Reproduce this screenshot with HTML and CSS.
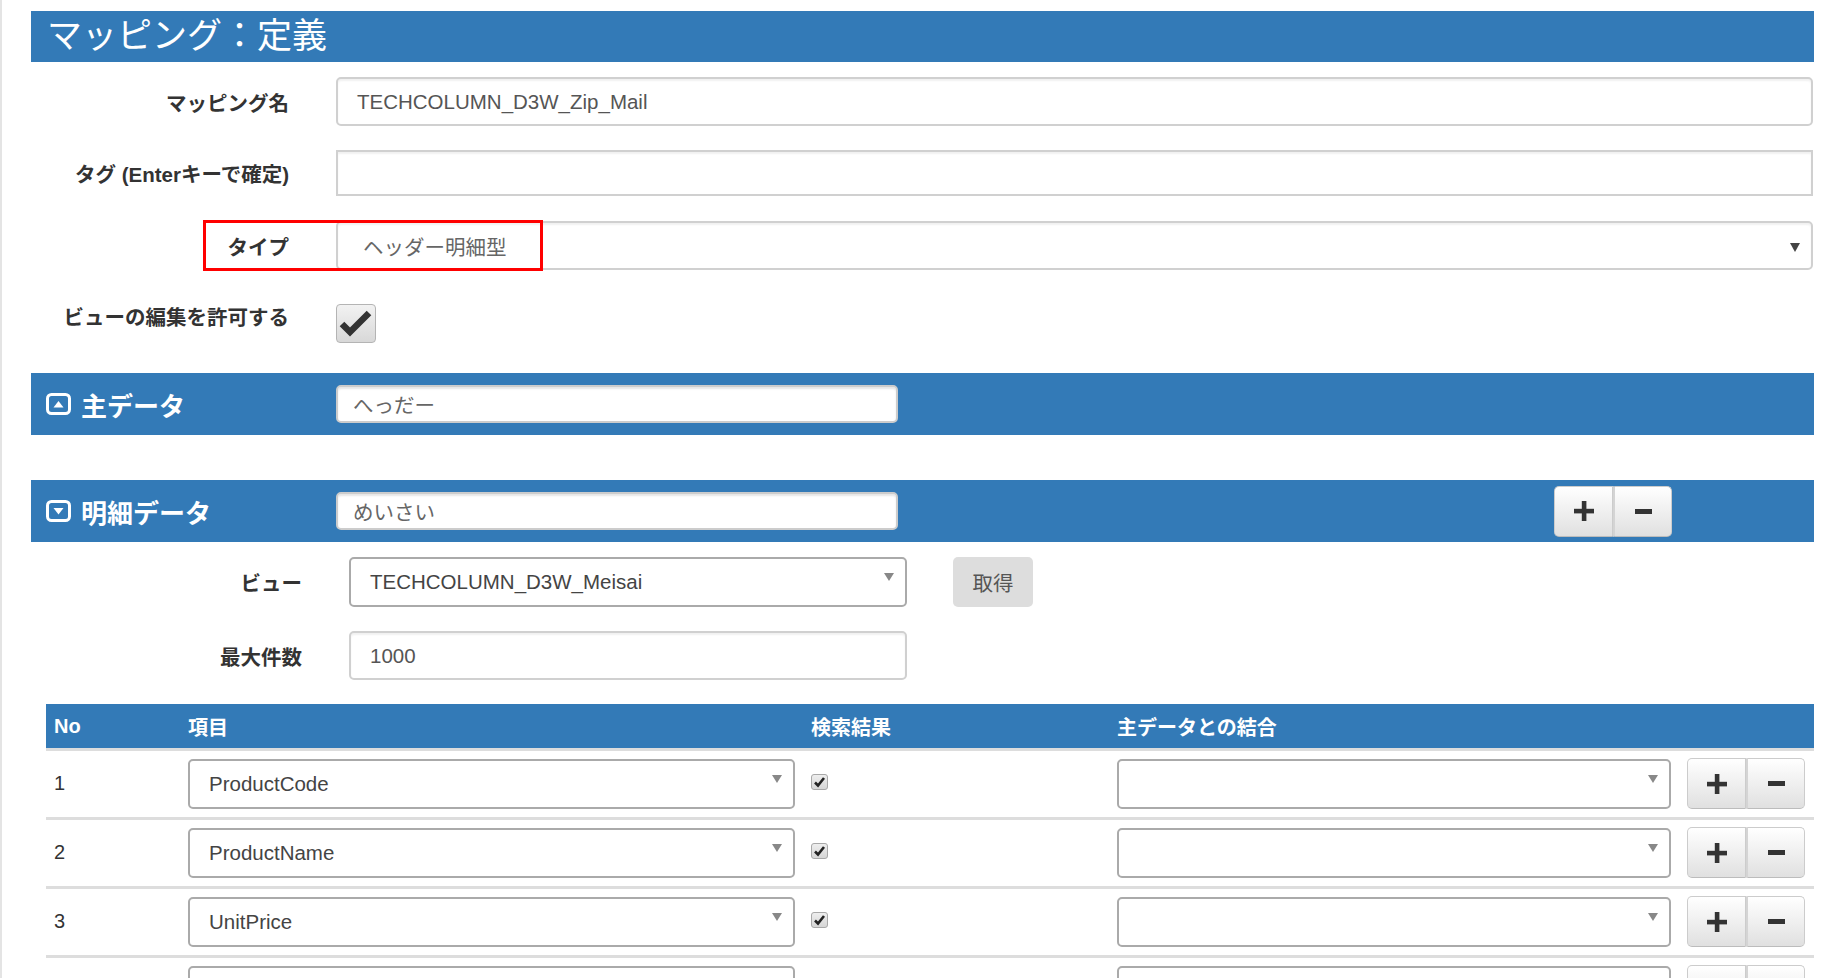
FILE: index.html
```html
<!DOCTYPE html>
<html lang="ja">
<head>
    <meta charset="UTF-8">
    <title>マッピング：定義</title>
    <link rel="stylesheet" href="styles.css">
</head>
<body>
    <div class="page">
        <h1 class="title-bar">マッピング：定義</h1>

        <div class="form">
            <div class="form-row row-name">
                <label class="form-label">マッピング名</label>
                <div class="text-input">TECHCOLUMN_D3W_Zip_Mail</div>
            </div>
            <div class="form-row row-tag">
                <label class="form-label">タグ (Enterキーで確定)</label>
                <div class="text-input tag-input"></div>
            </div>
            <div class="form-row row-type">
                <label class="form-label">タイプ</label>
                <div class="text-input type-select">ヘッダー明細型<span class="caret-dark"></span></div>
                <div class="highlight"></div>
            </div>
            <div class="form-row row-check">
                <label class="form-label">ビューの編集を許可する</label>
                <div><span class="big-check">
                    <svg width="38" height="37" viewBox="0 0 38 37"><polyline points="5,19 13,27 32,8" fill="none" stroke="#333" stroke-width="6.5"/></svg>
                </span></div>
            </div>
        </div>

        <div class="section-bar">
            <div class="section-title">
                <svg class="collapse-icon" width="25" height="22" viewBox="0 0 25 22"><rect x="1.5" y="1.5" width="22" height="19" rx="4" fill="none" stroke="#fff" stroke-width="3"/><polygon points="7.5,14.5 17.5,14.5 12.5,8" fill="#fff"/></svg>
                主データ
            </div>
            <div class="bar-input">へっだー</div>
        </div>

        <div class="section-bar detail-bar">
            <div class="section-title">
                <svg class="collapse-icon" width="25" height="22" viewBox="0 0 25 22"><rect x="1.5" y="1.5" width="22" height="19" rx="4" fill="none" stroke="#fff" stroke-width="3"/><polygon points="7.5,8 17.5,8 12.5,14.5" fill="#fff"/></svg>
                明細データ
            </div>
            <div class="bar-input">めいさい</div>
            <div class="btn-group bar-buttons">
                <button class="btn"><svg width="20" height="20" viewBox="0 0 20 20"><rect x="7.8" y="0" width="4.6" height="20" fill="#333"/><rect x="0" y="7.8" width="20" height="4.6" fill="#333"/></svg></button>
                <button class="btn"><svg width="17" height="5" viewBox="0 0 17 5"><rect width="17" height="5" fill="#333"/></svg></button>
            </div>
        </div>

        <div class="detail-form">
            <div class="detail-row row-view">
                <label class="form-label">ビュー</label>
                <div class="select2">TECHCOLUMN_D3W_Meisai<span class="caret"></span></div>
                <button class="btn-fetch">取得</button>
            </div>
            <div class="detail-row row-max">
                <label class="form-label">最大件数</label>
                <div class="text-input">1000</div>
            </div>
        </div>

        <table class="item-table">
            <colgroup>
                <col class="col-no">
                <col class="col-item">
                <col class="col-result">
                <col class="col-join">
                <col class="col-btn">
            </colgroup>
            <thead>
                <tr>
                    <th>No</th>
                    <th>項目</th>
                    <th>検索結果</th>
                    <th>主データとの結合</th>
                    <th></th>
                </tr>
            </thead>
            <tbody>
                <tr>
                    <td>1</td>
                    <td><div class="select2">ProductCode<span class="caret"></span></div></td>
                    <td><span class="small-check"><svg width="13" height="12" viewBox="0 0 13 12"><polyline points="2,6.5 5,9.5 11,2" fill="none" stroke="#222" stroke-width="2.6"/></svg></span></td>
                    <td><div class="select2"><span class="caret"></span></div></td>
                    <td>
                        <div class="btn-group">
                            <button class="btn"><svg width="20" height="20" viewBox="0 0 20 20"><rect x="7.8" y="0" width="4.6" height="20" fill="#333"/><rect x="0" y="7.8" width="20" height="4.6" fill="#333"/></svg></button>
                            <button class="btn"><svg width="17" height="5" viewBox="0 0 17 5"><rect width="17" height="5" fill="#333"/></svg></button>
                        </div>
                    </td>
                </tr>
                <tr>
                    <td>2</td>
                    <td><div class="select2">ProductName<span class="caret"></span></div></td>
                    <td><span class="small-check"><svg width="13" height="12" viewBox="0 0 13 12"><polyline points="2,6.5 5,9.5 11,2" fill="none" stroke="#222" stroke-width="2.6"/></svg></span></td>
                    <td><div class="select2"><span class="caret"></span></div></td>
                    <td>
                        <div class="btn-group">
                            <button class="btn"><svg width="20" height="20" viewBox="0 0 20 20"><rect x="7.8" y="0" width="4.6" height="20" fill="#333"/><rect x="0" y="7.8" width="20" height="4.6" fill="#333"/></svg></button>
                            <button class="btn"><svg width="17" height="5" viewBox="0 0 17 5"><rect width="17" height="5" fill="#333"/></svg></button>
                        </div>
                    </td>
                </tr>
                <tr>
                    <td>3</td>
                    <td><div class="select2">UnitPrice<span class="caret"></span></div></td>
                    <td><span class="small-check"><svg width="13" height="12" viewBox="0 0 13 12"><polyline points="2,6.5 5,9.5 11,2" fill="none" stroke="#222" stroke-width="2.6"/></svg></span></td>
                    <td><div class="select2"><span class="caret"></span></div></td>
                    <td>
                        <div class="btn-group">
                            <button class="btn"><svg width="20" height="20" viewBox="0 0 20 20"><rect x="7.8" y="0" width="4.6" height="20" fill="#333"/><rect x="0" y="7.8" width="20" height="4.6" fill="#333"/></svg></button>
                            <button class="btn"><svg width="17" height="5" viewBox="0 0 17 5"><rect width="17" height="5" fill="#333"/></svg></button>
                        </div>
                    </td>
                </tr>
                <tr>
                    <td></td>
                    <td><div class="select2"><span class="caret"></span></div></td>
                    <td></td>
                    <td><div class="select2"><span class="caret"></span></div></td>
                    <td>
                        <div class="btn-group">
                            <button class="btn"></button>
                            <button class="btn"></button>
                        </div>
                    </td>
                </tr>
            </tbody>
        </table>
    </div>
</body>
</html>
```

FILE: styles.css
```css
html, body {
    margin: 0;
    background: #fff;
}
body {
    font-family: "Liberation Sans", "Noto Sans CJK JP", sans-serif;
    color: #333;
    overflow: hidden;
}
.page {
    min-height: 100vh;
    box-sizing: border-box;
    padding: 11px 28px 0 29px;
    border-left: 2px solid #e4e4e4;
}
.title-bar {
    margin: 0;
    height: 51px;
    line-height: 50px;
    background: #337ab7;
    color: #fff;
    font-size: 35px;
    font-weight: normal;
    padding-left: 16px;
}
.form {
    margin-top: 15px;
}
.form-row {
    display: grid;
    grid-template-columns: 305px 1fr;
    align-items: center;
    position: relative;
    margin-right: 1px;
}
.form-label {
    text-align: right;
    padding-right: 47px;
    font-size: 20.5px;
    font-weight: bold;
    color: #333;
}
.text-input {
    box-sizing: border-box;
    height: 49px;
    border: 2px solid #d0d0d0;
    border-radius: 5px;
    box-shadow: inset 0 2px 2px rgba(0,0,0,0.06);
    background: #fff;
    font-size: 20.5px;
    color: #555;
    padding: 0 19px;
    display: flex;
    align-items: center;
}
.row-name { margin-bottom: 24px; }
.row-tag { margin-bottom: 25px; }
.row-tag .text-input {
    height: 46px;
    border-radius: 0;
}
.row-type { margin-bottom: 34px; }
.type-select {
    position: relative;
    padding-left: 25px;
    color: #666;
}
.caret-dark {
    position: absolute;
    right: 11px;
    top: 20px;
    border-left: 5px solid transparent;
    border-right: 5px solid transparent;
    border-top: 9px solid #444;
}
.highlight {
    position: absolute;
    left: 172px;
    top: -1px;
    width: 340px;
    height: 51px;
    box-sizing: border-box;
    border: 3px solid #f00;
}
.row-check {
    align-items: start;
    margin-bottom: 30px;
}
.row-check .form-label {
    line-height: 28px;
}
.big-check {
    display: flex;
    width: 40px;
    height: 39px;
    box-sizing: border-box;
    border: 1px solid #b4b4b4;
    border-radius: 4px;
    background: linear-gradient(#f2f2f2, #d8d8d8);
}
.section-bar {
    display: grid;
    grid-template-columns: 305px 562px 1fr auto;
    align-items: center;
    height: 62px;
    background: #337ab7;
    margin-bottom: 45px;
}
.section-title {
    display: flex;
    align-items: center;
    gap: 10px;
    padding-left: 15px;
    color: #fff;
    font-size: 26px;
    font-weight: bold;
}
.collapse-icon {
    flex: none;
}
.bar-input {
    box-sizing: border-box;
    height: 38px;
    border: 2px solid #ccc;
    border-radius: 5px;
    box-shadow: inset 0 2px 2px rgba(0,0,0,0.1);
    background: #fff;
    font-size: 20.5px;
    color: #666;
    padding: 0 15px;
    display: flex;
    align-items: center;
}
.detail-bar {
    margin-bottom: 15px;
}
.bar-buttons {
    grid-column: 4;
    margin-right: 142px;
}
.btn-group {
    display: flex;
}
.btn {
    box-sizing: border-box;
    width: 59px;
    height: 51px;
    border: 1px solid #ccc;
    border-bottom-color: #bcbcbc;
    background: linear-gradient(#fff, #e0e0e0);
    display: flex;
    align-items: center;
    justify-content: center;
    padding: 0;
    margin: 0;
}
.btn:first-child {
    border-radius: 5px 0 0 5px;
}
.btn:last-child {
    border-radius: 0 5px 5px 0;
    border-left: 2px solid #d4d4d4;
}
.detail-form {
    padding-left: 13px;
}
.detail-row {
    display: grid;
    grid-template-columns: 305px 558px auto;
    align-items: center;
    justify-content: start;
}
.row-view {
    margin-bottom: 24px;
}
.row-max {
    margin-bottom: 24px;
}
.row-max .text-input {
    height: 49px;
}
.select2 {
    position: relative;
    box-sizing: border-box;
    height: 50px;
    border: 2px solid #aaa;
    border-radius: 5px;
    background: #fff;
    font-size: 20.5px;
    color: #444;
    padding: 0 19px;
    display: flex;
    align-items: center;
}
.caret {
    position: absolute;
    right: 11px;
    top: 14px;
    border-left: 5px solid transparent;
    border-right: 5px solid transparent;
    border-top: 8px solid #888;
}
.btn-fetch {
    margin-left: 46px;
    width: 80px;
    height: 50px;
    border: none;
    border-radius: 5px;
    background: #ddd;
    color: #555;
    font-family: inherit;
    font-size: 20.5px;
}
.item-table {
    margin-left: 15px;
    width: 1768px;
    border-collapse: collapse;
    table-layout: fixed;
}
.col-no { width: 134px; }
.col-item { width: 623px; }
.col-result { width: 306px; }
.col-join { width: 570px; }
.col-btn { width: 135px; }
.item-table th {
    height: 44px;
    padding: 0 8px;
    background: #337ab7;
    color: #fff;
    font-size: 20px;
    font-weight: bold;
    text-align: left;
    border-bottom: 3px solid #ddd;
}
.item-table td {
    padding: 7px 8px 8px;
    border-bottom: 3px solid #ddd;
    font-size: 20px;
    color: #333;
    vertical-align: middle;
}
.small-check {
    display: flex;
    align-items: center;
    justify-content: center;
    width: 17px;
    height: 16px;
    box-sizing: border-box;
    border: 1px solid #a8a8a8;
    border-radius: 3px;
    background: linear-gradient(#eee, #d6d6d6);
    margin-top: -4px;
}
```
